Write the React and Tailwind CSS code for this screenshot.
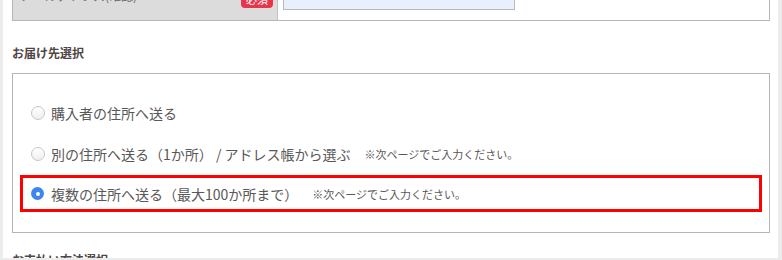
import React, { useState } from 'react';

const options = [
  { id: 'self', label: '購入者の住所へ送る', note: '' },
  { id: 'other', label: '別の住所へ送る（1か所） / アドレス帳から選ぶ', note: '※次ページでご入力ください。' },
  { id: 'multi', label: '複数の住所へ送る（最大100か所まで）', note: '※次ページでご入力ください。' },
];

const Radio = ({ checked }) => (
  <span
    className={
      checked
        ? 'flex h-[13px] w-[13px] shrink-0 items-center justify-center rounded-full bg-[#3d86f0]'
        : 'block h-[14px] w-[14px] shrink-0 rounded-full border border-[#c6c6c6] bg-gradient-to-b from-white to-[#efefef]'
    }
  >
    {checked && <span className="block h-[4px] w-[4px] rounded-full bg-white" />}
  </span>
);

const App = () => {
  const [selected, setSelected] = useState('multi');

  return (
    <div
      className="h-[260px] w-[782px] overflow-hidden border-b-2 border-l-[3px] border-r-[4px] border-[#ececec] bg-white text-[#595757]"
      style={{ fontFamily: '"Noto Sans CJK JP", "Noto Sans", sans-serif' }}
    >
      <div className="pl-[9px] pr-[8px]">
        {/* Previous form row (cut off at top) */}
        <div className="-mt-[20px] flex h-[41px] border border-t-0 border-[#b7b7b7]">
          <div className="flex w-[265px] items-end justify-between border-r border-[#c4c4c4] bg-[#dcdcdc] pb-[11px] pl-[8px] pr-[4px]">
            <span className="mb-[5px] text-[12px] leading-[16px] text-[#6a6a6a]">メールアドレス(確認)</span>
            <span className="mb-[1px] rounded-[4px] bg-[#e8354c] px-[5px] text-[11px] leading-[18px] text-white">必須</span>
          </div>
          <div className="flex-1 pl-[5px]">
            <div className="h-[30px] w-[232px] border border-[#b9b9b9] bg-[#e8f0fe]" />
          </div>
        </div>

        <h2 className="mt-[23px] text-[12px] font-bold leading-[18px] text-[#4f4545]">お届け先選択</h2>

        <div className="mt-[11px] border border-[#b5b5b5] px-[7px] pb-[20px] pt-[20px]">
          <div className="flex flex-col">
            {options.map((opt, i) => (
              <label
                key={opt.id}
                onClick={() => setSelected(opt.id)}
                className={
                  'flex h-[37px] cursor-pointer items-center pl-[8px] ' +
                  (opt.id === 'multi' ? 'border-[3px] border-[#ff0000]' : 'border-[3px] border-transparent') +
                  (i === 1 ? ' mt-[4px]' : '') +
                  (i === 2 ? ' mt-[3px]' : '')
                }
              >
                <Radio checked={selected === opt.id} />
                <span className={(selected === opt.id ? 'ml-[7px]' : 'ml-[6px]') + ' text-[14px] leading-[20px]'}>{opt.label}</span>
                {opt.note && <span className="ml-[14px] text-[11px] leading-[16px]">{opt.note}</span>}
              </label>
            ))}
          </div>
        </div>

        <h2 className="mt-[18px] text-[12px] font-bold leading-[18px] text-[#4f4545]">お支払い方法選択</h2>
      </div>
    </div>
  );
};

export default App;
